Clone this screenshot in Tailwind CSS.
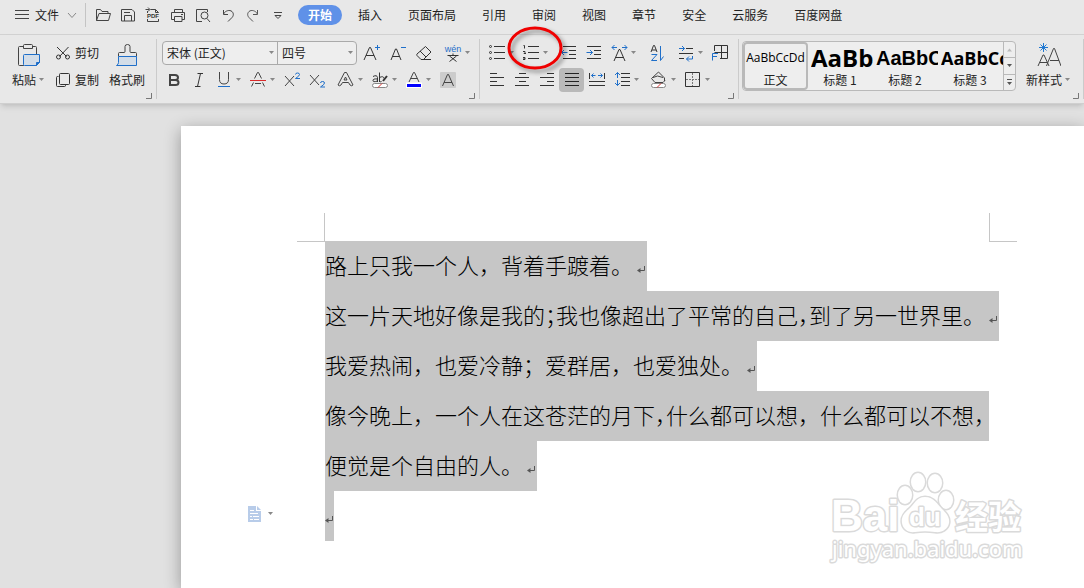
<!DOCTYPE html>
<html lang="zh-CN">
  <head>
    <meta charset="UTF-8" />
    <meta name="viewport" content="width=device-width, initial-scale=1.0" />
    <title>文档</title>
    <script src="https://cdn.jsdelivr.net/npm/@tailwindcss/browser@4"></script>
  </head>
  <body class="flex min-h-screen flex-col overflow-hidden bg-[#e1e1e1] font-['Noto_Sans_CJK_SC',sans-serif] text-xs text-[#222]">
    <!-- Shared icons -->
    <svg class="hidden">
      <symbol id="caret" viewBox="0 0 7 4"><path d="M1 0h5L3.500 3z" fill="#888" /></symbol>
      <symbol id="launcher" viewBox="0 0 6 6"><path d="M5.500 0v5.500H0" fill="none" stroke="#777" /></symbol>
      <symbol id="return" viewBox="0 0 8 8"><path d="M7.500 0v4.500H2" fill="none" stroke="#555" /><path d="M0 4.500 3.500 2v5z" fill="#555" /></symbol>
    </svg>

    <!-- Menu bar -->
    <nav class="flex h-[35px] shrink-0 items-center border-b border-[#d2d2d2] bg-[#e8e8e8] pb-1">
      <button class="flex h-6 items-center pl-[15px]">
        <svg class="mr-1.5 h-3 w-3.5" viewBox="0 0 14 12" fill="none" stroke="#444"><path d="M0 1.500h14M0 5.500h14M0 9.500h14" /></svg>
        文件
        <svg class="ml-2 h-2.5 w-2.5" viewBox="0 0 10 10" fill="none" stroke="#888"><path d="m1 3 4 4.500L9 3" /></svg>
      </button>
      <span class="ml-2 h-6 w-px bg-[#c4c4c4]"></span>
      <div class="ml-1 flex">
        <button class="flex w-[25px] justify-center" aria-label="打开">
          <svg class="size-4" viewBox="0 0 16 16" fill="none" stroke="#444"><path d="M1.500 13.500v-11h4l1.500 2h6v2M1.500 13.500l2.500-7h11.500l-2 7z" /></svg>
        </button>
        <button class="flex w-[25px] justify-center" aria-label="保存">
          <svg class="size-4" viewBox="0 0 16 16" fill="none" stroke="#444"><path d="M1.500 2.500h10.500l2.500 2.500v9h-13zM4.500 14V8.500h7V14M4 5.500h6" /></svg>
        </button>
        <button class="flex w-[25px] justify-center" aria-label="输出为PDF">
          <svg class="size-4" viewBox="0 0 16 16" fill="none" stroke="#444"><path d="M5.500 2.500h5l3 3M2.500 4v2M13.500 12v2.500h-11V12M0.500 2.500h4M3 .500l2 2-2 2M10.500 2.500v3h3" /><text x="8" y="11" fill="#333" stroke="none" font-size="6" font-weight="700" text-anchor="middle" font-family="Liberation Sans">PDF</text></svg>
        </button>
        <button class="flex w-[25px] justify-center" aria-label="打印">
          <svg class="size-4" viewBox="0 0 16 16" fill="none" stroke="#444"><path d="M4.500 5V2.500h8V5M4 12.500H1.500v-7h13v7H12M4.500 9.500h7.500v5H4.500zM11 7.500h2" /></svg>
        </button>
        <button class="flex w-[25px] justify-center" aria-label="打印预览">
          <svg class="size-4" viewBox="0 0 16 16" fill="none" stroke="#444"><path d="M7 14.500H1.500v-12h11V5M12 11.500l3 3.500" /><circle cx="9.500" cy="8.500" r="3.500" /></svg>
        </button>
        <button class="flex w-[25px] justify-center" aria-label="撤销">
          <svg class="size-4" viewBox="0 0 16 16" fill="none" stroke="#444"><path d="M3.500 3v4.500H8M3.500 7c2-3.500 6-4.500 8.500-2.500 2 2 1.500 4.500 0 6L8 14.500" /></svg>
        </button>
        <button class="flex w-[25px] justify-center" aria-label="恢复">
          <svg class="size-4" viewBox="0 0 16 16" fill="none" stroke="#555"><path d="M12.500 3v4.500H8M12.500 7c-2-3.500-6-4.500-8.500-2.500-2 2-1.500 4.500 0 6L8 14.500" /></svg>
        </button>
        <button class="flex w-[25px] justify-center" aria-label="更多">
          <svg class="size-4" viewBox="0 0 16 16" fill="none" stroke="#444"><path d="M4 5.500h8M5 8.500h6l-3 3z" /></svg>
        </button>
      </div>
      <div class="ml-[5px] flex items-center whitespace-nowrap">
        <a href="#" class="mx-[3px] rounded-full bg-[#5f91e8] px-2.5 py-0.5 leading-4 font-bold text-white">开始</a>
        <a href="#" class="px-[13px]">插入</a>
        <a href="#" class="px-[13px]">页面布局</a>
        <a href="#" class="px-[13px]">引用</a>
        <a href="#" class="px-[13px]">审阅</a>
        <a href="#" class="px-[13px]">视图</a>
        <a href="#" class="px-[13px]">章节</a>
        <a href="#" class="px-[13px]">安全</a>
        <a href="#" class="px-[13px]">云服务</a>
        <a href="#" class="px-[13px]">百度网盘</a>
      </div>
    </nav>

    <!-- Ribbon -->
    <div class="flex h-[69px] shrink-0 border-b border-[#cfcfcf] bg-[#e8e8e8] py-1 whitespace-nowrap shadow-md">
      <!-- Clipboard -->
      <section class="relative flex w-[157px] shrink-0 border-r border-[#cbcbcb] pt-1 pl-[11px]">
        <button class="flex w-[35px] flex-col items-center">
          <svg class="mb-[5px] h-6 w-6" viewBox="0 0 24 24" fill="none" stroke="#444">
            <path d="M6 3.500H2.500q-1 0-1 1v17q0 1 1 1H7M16 3.500h2.500q1 0 1 1V11M6.500 2.500q0-1 1-1h7q1 0 1 1v3h-9z" />
            <path d="M7.500 11.500h15v8l-3 3h-12q-1 0-1-1v-9q0-1 1-1z" fill="#d3dde8" stroke="#1f6fc9" /><path d="M22.500 19.500h-3v3z" fill="#1f6fc9" stroke="#1f6fc9" />
          </svg>
          <span class="flex items-center leading-4">粘贴<svg class="ml-0.5 h-1 w-[7px]"><use href="#caret" /></svg></span>
        </button>
        <div class="-mt-1 ml-[9px] flex flex-col">
          <button class="flex h-[27px] items-center gap-1 leading-4">
            <svg class="size-4" viewBox="0 0 16 16" fill="none" stroke="#333"><path d="M2 2l9.500 9.500M13.500 2 4.500 11.500" /><circle cx="3.500" cy="12" r="2" /><circle cx="12.500" cy="12" r="2" /></svg>
            剪切
          </button>
          <button class="flex h-[27px] items-center gap-1 leading-4">
            <svg class="size-4" viewBox="0 0 16 16" fill="none" stroke="#333"><path d="M3.500 4.500h-1q-1 0-1 1v8q0 1 1 1h7q1 0 1-1v-1" /><rect x="4.500" y="1.500" width="10" height="11" rx="1" /></svg>
            复制
          </button>
        </div>
        <button class="ml-[10px] flex flex-col items-center">
          <svg class="mb-[5px] h-6 w-6" viewBox="0 0 24 24" fill="none" stroke="#444">
            <path d="M3.500 13.500h18v9h-18z" fill="#d3dde8" stroke="none" /><path d="M3.500 13.500v-3q0-1 1-1H9q1 0 1-1v-5q0-2 2.500-2t2.500 2v5q0 1 1 1h4.500q1 0 1 1v3" />
            <path d="M3.500 13.500h18v9h-20q2-1 2-3z" stroke="#1f6fc9" />
          </svg>
          <span class="leading-4">格式刷</span>
        </button>
        <svg class="absolute right-1 bottom-0 size-1.5"><use href="#launcher" /></svg>
      </section>

      <!-- Font -->
      <section class="relative w-[323px] shrink-0 border-r border-[#cbcbcb] pl-1">
        <div class="flex h-7 items-center gap-px pl-px">
          <div class="mr-px flex h-6 rounded border border-[#aaa] bg-[#eee]">
            <label class="relative flex w-[115px] items-center border-r border-[#aaa]">
              <select class="w-full appearance-none bg-transparent pl-1 outline-none" aria-label="字体"><option>宋体 (正文)</option></select>
              <svg class="pointer-events-none absolute right-0.5 h-1 w-[7px]"><use href="#caret" /></svg>
            </label>
            <label class="relative flex w-[78px] items-center">
              <select class="w-full appearance-none bg-transparent pl-1 outline-none" aria-label="字号"><option>四号</option></select>
              <svg class="pointer-events-none absolute right-0.5 h-1 w-[7px]"><use href="#caret" /></svg>
            </label>
          </div>
          <button class="flex w-[25px] justify-center" aria-label="增大字号">
            <svg class="size-[18px]" viewBox="0 0 18 18" fill="none" stroke="#333"><path d="M1 16 6.500 3.500h1L13 16M3 11.500h8" /><path d="M14.500 1v5M12 3.500h5" stroke="#1f6fc9" /></svg>
          </button>
          <button class="flex w-[25px] justify-center" aria-label="减小字号">
            <svg class="size-[18px]" viewBox="0 0 18 18" fill="none" stroke="#333"><path d="M2 16 6.500 5h1L12 16M3.500 12.500h7" /><path d="M12 3.500h5" stroke="#1f6fc9" /></svg>
          </button>
          <button class="flex w-[25px] justify-center" aria-label="清除格式">
            <svg class="size-[18px]" viewBox="0 0 18 18" fill="none" stroke="#333"><path d="M10.500 2.500 16 8l-7.500 7.500H6L2 11.500q-.500-1 0-1.500zM5 7l6 6M8 15.500h8" /></svg>
          </button>
          <button class="ml-[3px] flex w-[34px] items-center gap-0.5 pl-1" aria-label="拼音指南">
            <svg class="size-[18px]" viewBox="0 0 18 18"><text x="9" y="8" fill="#1f6fc9" font-size="9" text-anchor="middle" font-family="Liberation Sans">wén</text><path d="M3.500 11.500h11M9 9.500v2M5.500 12l7 5.500M12.500 12l-7 5.500" fill="none" stroke="#333" /></svg>
            <svg class="h-1 w-[7px]"><use href="#caret" /></svg>
          </button>
        </div>
        <div class="flex h-[26px] items-center">
          <button class="flex w-[25px] justify-center" aria-label="加粗">
            <svg class="size-[18px]" viewBox="0 0 18 18" fill="none" stroke="#444" stroke-width="2"><path d="M5 4h5q3 0 3 2.500T10 9H5zM5 9h5.500q3 0 3 2.500t-3 2.500H5z" /></svg>
          </button>
          <button class="flex w-[25px] justify-center" aria-label="倾斜">
            <svg class="size-[18px]" viewBox="0 0 18 18" fill="none" stroke="#333"><path d="M7.500 2.500H13M5 15.500h5.500M10.500 2.500l-3 13" /></svg>
          </button>
          <button class="flex w-[34px] items-center gap-0.5 pl-1" aria-label="下划线">
            <svg class="size-[18px]" viewBox="0 0 18 18" fill="none" stroke="#444"><path d="M4.500 1v7.500q0 4.500 4.500 4.500t4.500-4.500V1" /><path d="M3 15.500h12" stroke="#1f6fc9" /></svg>
            <svg class="h-1 w-[7px]"><use href="#caret" /></svg>
          </button>
          <button class="flex w-[34px] items-center gap-0.5 pl-1" aria-label="删除线">
            <svg class="size-[18px]" viewBox="0 0 18 18" fill="none" stroke="#444"><path d="M5.500 7.500 8.500 1.500h1l3 6M4.500 11.500l-2 4M13.500 11.500l2 4M6 12.500h6" /><path d="M1 9.500h16" stroke="#d92b2b" /></svg>
            <svg class="h-1 w-[7px]"><use href="#caret" /></svg>
          </button>
          <button class="flex w-[25px] justify-center" aria-label="上标">
            <svg class="size-[18px]" viewBox="0 0 18 18" fill="none" stroke="#444"><path d="m2 5 9 10M11 5 2 15" /><path d="M12.500 3.500q0-1.500 2-1.500t2 1.500-4 4h4.500" stroke="#1f6fc9" /></svg>
          </button>
          <button class="flex w-[25px] justify-center" aria-label="下标">
            <svg class="size-[18px]" viewBox="0 0 18 18" fill="none" stroke="#444"><path d="m2 4 9 10M11 4 2 14" /><path d="M12.500 12q0-1.500 2-1.500t2 1.500-4 4h4.500" stroke="#1f6fc9" /></svg>
          </button>
          <button class="ml-1 flex w-[34px] items-center gap-0.5 pl-1" aria-label="文字效果">
            <svg class="size-[18px]" viewBox="0 0 18 18" fill="none" stroke="#444"><path d="M7.500 1.500h2L16 14q-1.500 1.500-3 0l-1.500-2.500h-6L4 14q-1.500 1.500-3 0zM8.500 6l-1.500 3h3z" /></svg>
            <svg class="h-1 w-[7px]"><use href="#caret" /></svg>
          </button>
          <button class="flex w-[34px] items-center gap-0.5 pl-1" aria-label="突出显示">
            <svg class="size-[18px]" viewBox="0 0 18 18" fill="none" stroke="#333"><path d="M2 5.500q4-2 4.500 1V11M6.500 8Q2 7.500 2 9.500T6.500 10M8.500 1.500V11M8.500 6.500q4-2 4.500 1M8.500 10.500q1 .500 2 0" /><path d="m16 5-4 5" stroke-width="2" /><rect x="1.500" y="12.500" width="15" height="4" rx="2" fill="#fff" stroke="#888" /><path d="m7 16.500 4-4" stroke="#d33" /></svg>
            <svg class="h-1 w-[7px]"><use href="#caret" /></svg>
          </button>
          <button class="flex w-[34px] items-center gap-0.5 pl-1" aria-label="字体颜色">
            <svg class="size-[18px]" viewBox="0 0 18 18" fill="none" stroke="#444"><path d="M4 11 8.500 1.500h1L14 11M5.500 7.500h7" /><path d="M1 11.500h16V17H1z" fill="#fff" stroke="none" /><path d="M2 14.500h14" stroke="#00f" stroke-width="3" /></svg>
            <svg class="h-1 w-[7px]"><use href="#caret" /></svg>
          </button>
          <button class="flex w-[25px] justify-center" aria-label="字符底纹">
            <svg class="size-[18px]" viewBox="0 0 18 18" fill="none" stroke="#444"><rect x="1" y="1" width="16" height="16" rx="1" fill="#ccc" stroke="none" /><path d="M3.500 15 8.500 3.500h1L14.500 15M5 11.500h8" /></svg>
          </button>
        </div>
        <svg class="absolute right-1 bottom-0 size-1.5"><use href="#launcher" /></svg>
      </section>

      <!-- Paragraph -->
      <section class="relative w-[259px] shrink-0 border-r border-[#cbcbcb] pl-1">
        <div class="flex h-7 items-center">
          <button class="flex w-[34px] items-center gap-0.5 pl-1" aria-label="项目符号">
            <svg class="size-[18px]" viewBox="0 0 18 18" fill="none" stroke="#333"><path d="M6 2.500h11M6 8.500h11M6 14.500h11" /><circle cx="2.500" cy="2.500" r="1" /><circle cx="2.500" cy="8.500" r="1" /><circle cx="2.500" cy="14.500" r="1" /></svg>
            <svg class="h-1 w-[7px]"><use href="#caret" /></svg>
          </button>
          <button class="relative flex w-[34px] items-center gap-0.5 pl-1" aria-label="编号">
            <svg class="size-[18px]" viewBox="0 0 18 18" fill="none" stroke="#333"><path d="M6 2.500h11M6 8.500h11M6 14.500h11M1.500 1.500h1v3M1 7.500h2v1l-1 1h2M1 13.500h2v2H1M1.500 14.500h1" /></svg>
            <svg class="h-1 w-[7px]"><use href="#caret" /></svg>
            <!-- Red highlight ring -->
            <svg class="pointer-events-none absolute -top-5 -left-3.5 z-10 h-14 w-16 drop-shadow-[3px_3px_2px_#0006]" viewBox="0 0 64 56"><ellipse cx="31" cy="24" rx="26" ry="20" fill="none" stroke="#f00000" stroke-width="3" /></svg>
          </button>
          <button class="ml-1 flex w-[25px] justify-center" aria-label="减少缩进">
            <svg class="size-[18px]" viewBox="0 0 18 18" fill="none" stroke="#333"><path d="M3 2.500h13M9 6.500h7M9 10.500h7M3 14.500h13" /><path d="M1.500 8.500h6M4 6 1.500 8.500 4 11" stroke="#1f6fc9" /></svg>
          </button>
          <button class="flex w-[25px] justify-center" aria-label="增加缩进">
            <svg class="size-[18px]" viewBox="0 0 18 18" fill="none" stroke="#333"><path d="M2 2.500h14M9 6.500h7M9 10.500h7M2 14.500h14" /><path d="M1.500 8.500h6M5 6l2.500 2.500L5 11" stroke="#1f6fc9" /></svg>
          </button>
          <button class="flex w-[34px] items-center gap-0.5 pl-1" aria-label="中文版式">
            <svg class="size-[18px]" viewBox="0 0 18 18" fill="none" stroke="#333"><path d="M4 17 9 5.500h1L15 17M5.500 13.500h8" /><path d="M2 3.500h5M4.500 1 2 3.500 4.500 6M12 3.500h5M14.500 1 17 3.500 14.500 6" stroke="#1f6fc9" /></svg>
            <svg class="h-1 w-[7px]"><use href="#caret" /></svg>
          </button>
          <button class="ml-1 flex w-[25px] justify-center" aria-label="排序">
            <svg class="size-[18px]" viewBox="0 0 18 18" fill="none" stroke="#333"><path d="M3 8 5.500 1.500h1L9 8M4 6h4" /><path d="M3.500 10.500H9l-5.500 6H9M12.500 2v14.500l3-4" stroke="#1f6fc9" /></svg>
          </button>
          <button class="ml-1 flex w-[34px] items-center gap-0.5 pl-1" aria-label="显示编辑标记">
            <svg class="size-[18px]" viewBox="0 0 18 18" fill="none" stroke="#333"><path d="M9 4.500h7M2 9.500h14M2 14.500h5" /><path d="M2 4.500h5.500M5 2l2.500 2.500L5 7M15.500 12v3H9.500M12 12.500l-2.500 2.500L12 17.500" stroke="#1f6fc9" /></svg>
            <svg class="h-1 w-[7px]"><use href="#caret" /></svg>
          </button>
          <button class="flex w-[25px] justify-center" aria-label="制表位">
            <svg class="size-[18px]" viewBox="0 0 18 18" fill="none" stroke="#333"><path d="M3.500 7V1.500h13v13H9M10.500 1.500v13M3.500 8.500h13" /><path d="M1.500 16.500v-7H7M1.500 12.500H6" stroke="#1f6fc9" /></svg>
          </button>
        </div>
        <div class="flex h-[26px] items-center">
          <button class="flex w-[25px] justify-center" aria-label="左对齐">
            <svg class="size-[18px]" viewBox="0 0 18 18" fill="none" stroke="#333"><path d="M2 2.500h7M2 6.500h14M2 10.500h7M2 14.500h14" /></svg>
          </button>
          <button class="flex w-[25px] justify-center" aria-label="居中">
            <svg class="size-[18px]" viewBox="0 0 18 18" fill="none" stroke="#333"><path d="M6 2.500h7M2 6.500h14M6 10.500h7M2 14.500h14" /></svg>
          </button>
          <button class="flex w-[25px] justify-center" aria-label="右对齐">
            <svg class="size-[18px]" viewBox="0 0 18 18" fill="none" stroke="#333"><path d="M9 2.500h7M2 6.500h14M9 10.500h7M2 14.500h14" /></svg>
          </button>
          <button class="flex h-6 w-[25px] items-center justify-center rounded bg-[#b9b9b9]" aria-label="两端对齐">
            <svg class="size-[18px]" viewBox="0 0 18 18" fill="none" stroke="#222"><path d="M2 2.500h14M2 6.500h14M2 10.500h14M2 14.500h14" /></svg>
          </button>
          <button class="flex w-[25px] justify-center" aria-label="分散对齐">
            <svg class="size-[18px]" viewBox="0 0 18 18" fill="none" stroke="#333"><path d="M1.500 2v6M16.500 2v6M1 10.500h16M1 14.500h16" /><path d="M3.500 4.500h4M5.500 2.500l-2 2 2 2M10 4.500h4.500M12.500 2.500l2 2-2 2" stroke="#1f6fc9" /></svg>
          </button>
          <button class="flex w-[34px] items-center gap-0.5 pl-1" aria-label="行距">
            <svg class="size-[18px]" viewBox="0 0 18 18" fill="none" stroke="#333"><path d="M8 2.500h9M8 6.500h9M8 10.500h9M8 14.500h9" /><path d="M4.500 1.500V7M2 4l2.500-2.500L7 4M4.500 9v5.500M2 12l2.500 2.500L7 12" stroke="#1f6fc9" /></svg>
            <svg class="h-1 w-[7px]"><use href="#caret" /></svg>
          </button>
          <button class="ml-[3px] flex w-[34px] items-center gap-0.5 pl-1" aria-label="底纹颜色">
            <svg class="size-[18px]" viewBox="0 0 18 18" fill="none" stroke="#444"><path d="m8.500 1 6 6v3M8.500 1l-7 6.500L5 11.500h8l2-2M3 6.500q4-3 10 0" /><rect x="1.500" y="12.500" width="14" height="4" rx="2" fill="#fff" stroke="#888" /><path d="m7 16.500 4-4" stroke="#d33" /></svg>
            <svg class="h-1 w-[7px]"><use href="#caret" /></svg>
          </button>
          <button class="flex w-[34px] items-center gap-0.5 pl-1" aria-label="边框">
            <svg class="size-[18px]" viewBox="0 0 18 18" fill="none" stroke="#333"><path d="M1.500 1.500h14v14h-14z" /><path d="M8.500 2v13M2 8.500h13" stroke="#777" stroke-dasharray="2 1" /></svg>
            <svg class="h-1 w-[7px]"><use href="#caret" /></svg>
          </button>
        </div>
        <svg class="absolute right-1 bottom-0 size-1.5"><use href="#launcher" /></svg>
      </section>

      <!-- Styles -->
      <section class="relative flex flex-1 border-r border-[#cbcbcb] pl-[3px]">
        <div class="mt-0.5 flex h-[50px] shrink-0 overflow-hidden rounded border border-[#b9b9b9] bg-[#eee] text-center">
          <button class="flex w-[65px] flex-col items-center rounded-sm border-2 border-[#b9b9b9]">
            <span class="flex h-7 items-center font-['Open_Sans'] text-xs text-black">AaBbCcDd</span>
            <span class="leading-4">正文</span>
          </button>
          <button class="flex w-[65px] flex-col items-center pt-0.5 pl-[3px]">
            <span class="flex h-7 w-full items-center overflow-hidden font-['Open_Sans'] text-2xl font-bold text-black">AaBb</span>
            <span class="pr-1 leading-4">标题 1</span>
          </button>
          <button class="flex w-[65px] flex-col items-center pt-0.5 pl-[3px]">
            <span class="flex h-7 w-full items-center overflow-hidden font-['Liberation_Sans'] text-xl font-bold text-black">AaBbC</span>
            <span class="pr-1 leading-4">标题 2</span>
          </button>
          <button class="flex w-[65px] flex-col items-center pt-0.5 pl-[3px]">
            <span class="flex h-7 w-full items-center overflow-hidden font-['Open_Sans'] text-lg font-bold text-black">AaBbCc</span>
            <span class="pr-1 leading-4">标题 3</span>
          </button>
          <div class="flex w-[12px] flex-col divide-y divide-[#b9b9b9] border-l border-[#b9b9b9]">
            <button class="flex flex-1 items-center justify-center" aria-label="上一行"><svg class="h-1 w-[7px]" viewBox="0 0 7 4"><path d="M1 3.500h5L3.500.500z" fill="#bbb" /></svg></button>
            <button class="flex flex-1 items-center justify-center" aria-label="下一行"><svg class="h-1 w-[7px]" viewBox="0 0 7 4"><path d="M1 0h5L3.500 3z" fill="#555" /></svg></button>
            <button class="flex flex-1 items-center justify-center" aria-label="更多样式"><svg class="h-1.5 w-[7px]" viewBox="0 0 7 6"><path d="M1 0h5v1H1zM1 3h5L3.500 6z" fill="#555" /></svg></button>
          </div>
        </div>
        <button class="ml-[10px] flex flex-col items-center pt-1">
          <svg class="mb-[5px] h-6 w-6" viewBox="0 0 24 24" fill="none" stroke="#444">
            <path d="M1 23 6 12h1l5 11M3 19.500h7M11 19l5.500-13.500h1L24 23M13 17.500h9M11 19l-1.500 4" /><path d="M6.500 0v9M2 4.500h9M3.500 1.500l6 6M9.500 1.500l-6 6" stroke="#1f78d1" />
          </svg>
          <span class="flex items-center leading-4">新样式<svg class="ml-0.5 h-1 w-[7px]"><use href="#caret" /></svg></span>
        </button>
        <svg class="absolute right-1 bottom-0 size-1.5"><use href="#launcher" /></svg>
      </section>
    </div>

    <!-- Document -->
    <main class="relative flex flex-1 pt-[22px] pl-[181px]">
      <div class="min-w-0 flex-1 bg-white pt-[87px] shadow-[0_4px_16px_#0005]">
        <div class="ml-[116px] flex h-[29px] w-[720px] justify-between">
          <span class="w-7 border-r border-b border-[#c6c6c6]"></span>
          <span class="w-7 border-b border-l border-[#c6c6c6]"></span>
        </div>
        <article class="-mt-px flex flex-col items-start text-[22px] leading-[46px] font-light whitespace-nowrap text-black">
          <p class="ml-36 flex items-center bg-[#c6c6c6] pr-0.5 pb-1">路上只我一个人，背着手踱着。<svg class="mt-3 ml-1 size-2"><use href="#return" /></svg></p>
          <p class="ml-36 flex items-center bg-[#c6c6c6] pr-0.5 pb-1"><span>这一片天地好像是我的<span class="[font-feature-settings:'halt']">；</span>我也像超出了平常的自己<span class="[font-feature-settings:'halt']">，</span>到了另一世界里。</span><svg class="mt-3 ml-1 size-2"><use href="#return" /></svg></p>
          <p class="ml-36 flex items-center bg-[#c6c6c6] pr-0.5 pb-1">我爱热闹，也爱冷静；爱群居，也爱独处。<svg class="mt-3 ml-1 size-2"><use href="#return" /></svg></p>
          <p class="ml-36 bg-[#c6c6c6] pr-1 pb-1">像今晚上，一个人在这苍茫的月下<span class="[font-feature-settings:'halt']">，</span>什么都可以想，什么都可以不想<span class="[font-feature-settings:'halt']">，</span></p>
          <p class="ml-36 flex items-center bg-[#c6c6c6] pr-0.5 pb-1">便觉是个自由的人。<svg class="mt-3 ml-1 size-2"><use href="#return" /></svg></p>
          <div class="flex h-[50px]">
            <button class="flex w-36 items-center gap-1.5 pb-1 pl-[67px]" aria-label="粘贴选项">
              <svg class="h-4 w-[13px]" viewBox="0 0 13 16"><path d="M0 0h8v5h5v11H0zM9 0l4 4H9z" fill="#b8cce9" /><path d="M2 4.500h4M2 7.500h8M2 10.500h2M5 10.500h6M2 13.500h3M6 13.500h5" stroke="#fff" /></svg>
              <svg class="h-1 w-[7px]"><use href="#caret" /></svg>
            </button>
            <p class="flex items-center bg-[#c6c6c6] pr-px"><svg class="mt-2 size-2"><use href="#return" /></svg></p>
          </div>
        </article>
      </div>

      <!-- Watermark -->
      <svg class="absolute right-[56px] bottom-5 h-[100px] w-[200px]" viewBox="0 0 200 100" fill="#fff" stroke="#dadada" stroke-width="3" stroke-linejoin="round" paint-order="stroke" font-family="Liberation Sans">
        <text x="3" y="63" font-size="44" font-weight="700">Bai</text>
        <ellipse cx="77" cy="27" rx="7" ry="9" /><ellipse cx="90" cy="14" rx="7" ry="9" /><ellipse cx="107" cy="15" rx="7" ry="9" /><ellipse cx="118" cy="32" rx="7" ry="9" />
        <path d="M97 29c-9 0-11 8-16 12s-8 8-7 14 6 10 13 9 13-1 20 0 13-3 14-9-3-10-7-14-8-12-17-12z" />
        <text x="97" y="58" font-size="26" font-weight="700" text-anchor="middle">du</text>
        <text x="127" y="61" font-size="33" font-weight="700" font-family="Noto Sans CJK SC">经验</text>
        <text x="4" y="89" font-size="22" font-family="Noto Sans">jingyan.baidu.com</text>
      </svg>
    </main>
  </body>
</html>
